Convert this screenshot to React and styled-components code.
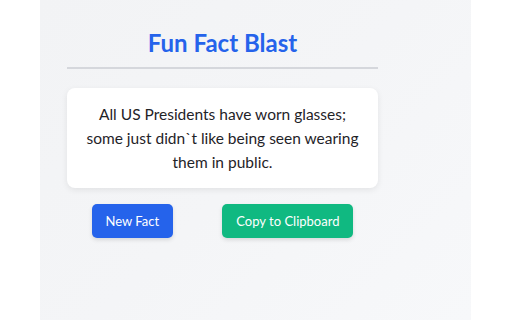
import React, { useState } from "react";
import styled, { createGlobalStyle } from "styled-components";

const GlobalStyle = createGlobalStyle`
    html, body {
        margin: 0;
        padding: 0;
        background: #ffffff;
        font-family: Lato, "Noto Sans", "Liberation Sans", sans-serif;
    }
`;

const Page = styled.div`
    width: 512px;
    height: 320px;
    display: flex;
    background: #ffffff;
`;

const Panel = styled.div`
    margin-left: 40px;
    width: 431px;
    height: 320px;
    box-sizing: border-box;
    padding: 27px 0 0 27px;
    background: linear-gradient(135deg, #f2f3f5 0%, #f4f5f7 50%, #f7f8fa 100%);
`;

const Content = styled.div`
    width: 311px;
    display: flex;
    flex-direction: column;
`;

const Title = styled.h1`
    margin: 0;
    padding-bottom: 8px;
    border-bottom: 2px solid #d5d7dc;
    text-align: center;
    font-size: 24px;
    line-height: 32px;
    font-weight: 700;
    color: #2563eb;
`;

const Card = styled.div`
    margin-top: 19px;
    background: #ffffff;
    border-radius: 8px;
    padding: 14px 13px;
    box-shadow: 0 2px 6px rgba(0, 0, 0, 0.08);
    text-align: center;
    font-size: 15.5px;
    line-height: 24px;
    color: #1f2328;
`;

const Actions = styled.div`
    margin-top: 16px;
    display: flex;
    justify-content: space-around;
`;

const Button = styled.button`
    height: 34px;
    padding: 0 14px;
    border: none;
    border-radius: 5px;
    background: ${(p) => p.$color};
    color: #ffffff;
    font-family: inherit;
    font-size: 13px;
    cursor: pointer;
    box-shadow: 0 2px 4px rgba(0, 0, 0, 0.12);
`;

const facts = [
    "All US Presidents have worn glasses; some just didn`t like being seen wearing them in public.",
];

export default function App() {
    const [fact] = useState(facts[0]);

    return (
        <Page>
            <GlobalStyle />
            <Panel>
                <Content>
                    <Title>Fun Fact Blast</Title>
                    <Card>{fact}</Card>
                    <Actions>
                        <Button $color="#2563eb">New Fact</Button>
                        <Button $color="#10b981">Copy to Clipboard</Button>
                    </Actions>
                </Content>
            </Panel>
        </Page>
    );
}
